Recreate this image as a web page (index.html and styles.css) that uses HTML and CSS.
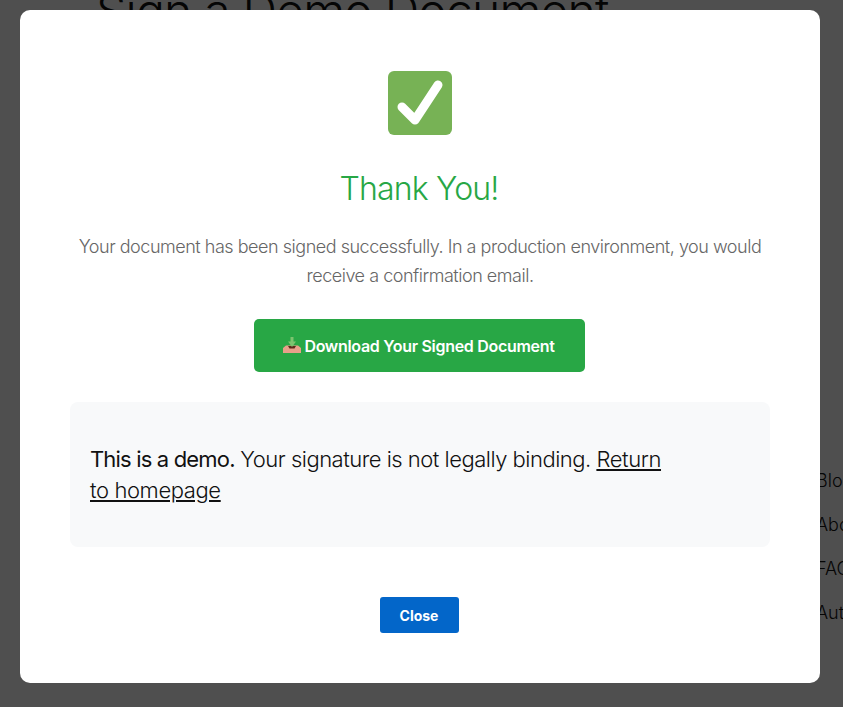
FILE: index.html
```html
<!DOCTYPE html>
<html lang="en">
<head>
    <meta charset="UTF-8">
    <meta name="viewport" content="width=device-width, initial-scale=1.0">
    <title>Sign a Demo Document</title>
    <link rel="stylesheet" href="styles.css">
</head>
<body>
    <div class="page">
        <h1 class="page-title">Sign a Demo Document</h1>
        <ul class="side-links">
            <li>Blog</li>
            <li>About</li>
            <li>FAQ</li>
            <li>Author</li>
        </ul>
    </div>

    <div class="overlay">
        <div class="modal">
            <svg class="success-icon" viewBox="0 0 64 64" aria-hidden="true">
                <rect width="64" height="64" rx="6" fill="#77b255"/>
                <path d="M14 36 L27 49 L50 14" fill="none" stroke="#fff" stroke-width="9" stroke-linecap="round" stroke-linejoin="round"/>
            </svg>
            <h2 class="thanks">Thank You!</h2>
            <p class="message">Your document has been signed successfully. In a production environment, you would receive a confirmation email.</p>
            <a href="#" class="btn-download">
                <svg class="tray-icon" viewBox="0 0 18 17" aria-hidden="true">
                    <path d="M0 11 L3 8.500 H15 L18 11 V16 H0 Z" fill="#e8a08a"/>
                    <path d="M5 9 H13 L11.500 11.500 H6.500 Z" fill="#5c2a1a"/>
                    <path d="M7.500 0 H10.500 V4.500 H13 L9 10 L5 4.500 H7.500 Z" fill="#7cc46f"/>
                </svg>
                Download Your Signed Document
            </a>
            <div class="demo-note">
                <p><strong>This is a demo.</strong> Your signature is not legally binding. <a href="#">Return to homepage</a></p>
            </div>
            <button class="btn-close">Close</button>
        </div>
    </div>
</body>
</html>
```

FILE: styles.css
```css
* { box-sizing: border-box; }
html, body { height: 100%; }
body { margin: 0; background: #fff; color: #111; font-family: Inter, "Noto Sans", sans-serif; overflow: hidden; }

/* page behind the modal */
.page { height: 100%; padding-left: 96px; display: flex; flex-direction: column; }
.page-title { margin: -18px 0 0; font-size: 48px; line-height: 58px; font-weight: 300; letter-spacing: -0.8px; white-space: nowrap; }
.side-links { list-style: none; margin: 419px 0 0 720px; padding: 0; font-size: 18px; font-weight: 300; }
.side-links li { height: 44px; line-height: 44px; white-space: nowrap; }

/* modal */
.overlay { position: fixed; inset: 0; background: rgba(0, 0, 0, 0.69); padding: 10px 23px 0 20px; }
.modal { width: 800px; height: 673px; padding: 61px 50px 0; background: #fff; border-radius: 10px; display: flex; flex-direction: column; align-items: center; }
.success-icon { width: 64px; height: 64px; display: block; flex: none; }
.thanks { margin: 33px 2px 0 0; color: #28a745; font-size: 32px; line-height: 42px; font-weight: 300; letter-spacing: -0.8px; }
.message { margin: 22px 0 0; color: #666; font-size: 18px; line-height: 29px; font-weight: 300; text-align: center; letter-spacing: -0.475px; }
.btn-download { margin: 29px 2px 0 0; width: 331px; height: 53px; display: flex; align-items: center; justify-content: center; gap: 3px; background: #28a745; color: #fff; border-radius: 5px; font-size: 16px; font-weight: 600; letter-spacing: -0.3px; text-decoration: none; }
.tray-icon { width: 18px; height: 17px; flex: none; }
.demo-note { margin-top: 30px; width: 700px; height: 145px; padding: 0 100px 0 20px; background: #f8f9fa; border-radius: 8px; display: flex; align-items: center; }
.demo-note p { margin: 0; font-size: 22px; line-height: 31px; font-weight: 300; letter-spacing: -0.5px; color: #111; }
.demo-note strong { font-weight: 400; letter-spacing: -0.83px; }
.demo-note a { color: inherit; letter-spacing: -0.4px; }
.btn-close { margin: 50px 2px 0 0; width: 79px; height: 36px; padding: 0; border: none; border-radius: 3px; background: #0366c9; color: #fff; font-family: inherit; font-size: 14px; font-weight: 700; }
```
